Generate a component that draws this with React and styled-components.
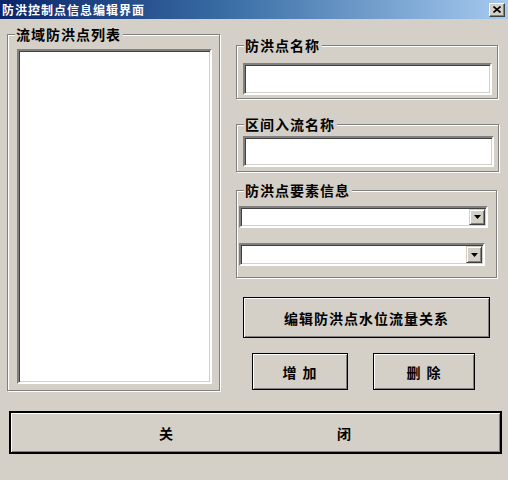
import React from "react";
import styled, { createGlobalStyle } from "styled-components";

const Global = createGlobalStyle`
  html, body { margin: 0; padding: 0; background: #d4d0c8; }
  body { font-family: "Noto Sans CJK SC", "Liberation Sans", sans-serif; }
`;

const Window = styled.div`
  width: 508px;
  height: 480px;
  background: #d4d0c8;
  display: flex;
  flex-direction: column;
  overflow: hidden;
`;

const TitleBar = styled.div`
  height: 19px;
  display: flex;
  align-items: center;
  justify-content: space-between;
  padding: 0 3px 0 2px;
  background: linear-gradient(to right, #0a246a 0%, #3a6ea5 45%, #a6caf0 100%);
`;

const Title = styled.span`
  color: #fff;
  font-size: 12px;
  font-weight: 700;
  letter-spacing: 1px;
  line-height: 19px;
`;

const CloseBox = styled.div`
  width: 14px;
  height: 12px;
  background: #d4d0c8;
  border: 1px solid;
  border-color: #fff #404040 #404040 #fff;
  box-shadow: inset -1px -1px #808080;
  display: flex;
  align-items: center;
  justify-content: center;
`;

const Main = styled.div`
  display: flex;
  align-items: flex-start;
  gap: 16px;
  padding: 15px 0 0 7px;
`;

const Group = styled.div`
  position: relative;
  box-sizing: border-box;
  width: ${(p) => p.$w}px;
  height: ${(p) => p.$h}px;
  margin-top: ${(p) => p.$mt || 0}px;
  border: 1px solid #808080;
  box-shadow: inset 1px 1px #fff, 1px 1px #fff;
  padding: ${(p) => p.$pad};
  display: flex;
  flex-direction: column;
  gap: ${(p) => p.$gap || 0}px;
`;

const Legend = styled.span`
  position: absolute;
  left: 7px;
  top: -9px;
  padding: 0 2px 0 1px;
  background: #d4d0c8;
  font-size: 14px;
  font-weight: 700;
  letter-spacing: 1px;
  line-height: 17px;
  color: #000;
`;

const Sunken = styled.div`
  box-sizing: border-box;
  background: #fff;
  border: 2px solid;
  border-color: #808080 #fff #fff #808080;
  box-shadow: inset 1px 1px #404040, inset -1px -1px #d4d0c8;
`;

const ListBox = styled(Sunken)`
  flex: 1;
`;

const TextBox = styled(Sunken)`
  height: ${(p) => p.$h}px;
  width: ${(p) => p.$w}px;
`;

const Combo = styled(Sunken)`
  width: ${(p) => p.$w}px;
  height: ${(p) => p.$h}px;
  display: flex;
  justify-content: flex-end;
  align-items: stretch;
  padding: 1px;
`;

const DropBtn = styled.div`
  width: 16px;
  box-sizing: border-box;
  background: #d4d0c8;
  border: 1px solid;
  border-color: #d4d0c8 #404040 #404040 #d4d0c8;
  box-shadow: inset 1px 1px #fff, inset -1px -1px #808080;
  display: flex;
  align-items: center;
  justify-content: center;
`;

const RightCol = styled.div`
  display: flex;
  flex-direction: column;
  padding-top: 11px;
`;

const Button = styled.div`
  box-sizing: border-box;
  width: ${(p) => p.$w}px;
  height: ${(p) => p.$h}px;
  margin-top: ${(p) => p.$mt || 0}px;
  margin-left: ${(p) => p.$ml || 0}px;
  border: ${(p) => (p.$thick ? 2 : 1)}px solid #000;
  background: #d4d0c8;
  box-shadow: inset 1px 1px #fff, inset -1px -1px #808080;
  display: flex;
  align-items: center;
  justify-content: center;
  gap: ${(p) => p.$gap || 0}px;
  font-size: 14px;
  font-weight: 700;
  letter-spacing: 1px;
  color: #000;
`;

const ButtonRow = styled.div`
  display: flex;
  gap: 25px;
  margin-top: 15px;
  padding-left: 16px;
`;

const Arrow = () => (
  <svg width="7" height="4" viewBox="0 0 7 4">
    <path d="M0 0H7L3.5 4Z" fill="#000" />
  </svg>
);

export default function App() {
  return (
    <Window>
      <Global />
      <TitleBar>
        <Title>防洪控制点信息编辑界面</Title>
        <CloseBox>
          <svg width="8" height="7" viewBox="0 0 8 7">
            <path d="M0.5 0.5L7.5 6.5M7.5 0.5L0.5 6.5" stroke="#000" strokeWidth="1.6" />
          </svg>
        </CloseBox>
      </TitleBar>
      <Main>
        <Group $w={213} $h={357} $pad="14px 7px 6px 9px">
          <Legend>流域防洪点列表</Legend>
          <ListBox />
        </Group>
        <RightCol>
          <Group $w={262} $h={54} $pad="17px 5px 3px 6px">
            <Legend>防洪点名称</Legend>
            <TextBox $w={249} $h={32} />
          </Group>
          <Group $w={263} $h={48} $mt={25} $pad="11px 4px 4px 6px">
            <Legend>区间入流名称</Legend>
            <TextBox $w={251} $h={31} />
          </Group>
          <Group $w={261} $h={88} $mt={18} $pad="15px 4px 4px 2px" $gap={15}>
            <Legend>防洪点要素信息</Legend>
            <Combo $w={249} $h={22}>
              <DropBtn><Arrow /></DropBtn>
            </Combo>
            <Combo $w={246} $h={23}>
              <DropBtn><Arrow /></DropBtn>
            </Combo>
          </Group>
          <Button $w={247} $h={41} $mt={19} $ml={7}>编辑防洪点水位流量关系</Button>
          <ButtonRow>
            <Button $w={96} $h={37} $gap={5}>
              <span>增</span><span>加</span>
            </Button>
            <Button $w={102} $h={37} $gap={5}>
              <span>删</span><span>除</span>
            </Button>
          </ButtonRow>
        </RightCol>
      </Main>
      <Button $thick $w={493} $h={43} $mt={20} $ml={9} $gap={163}>
        <span>关</span><span>闭</span>
      </Button>
    </Window>
  );
}
